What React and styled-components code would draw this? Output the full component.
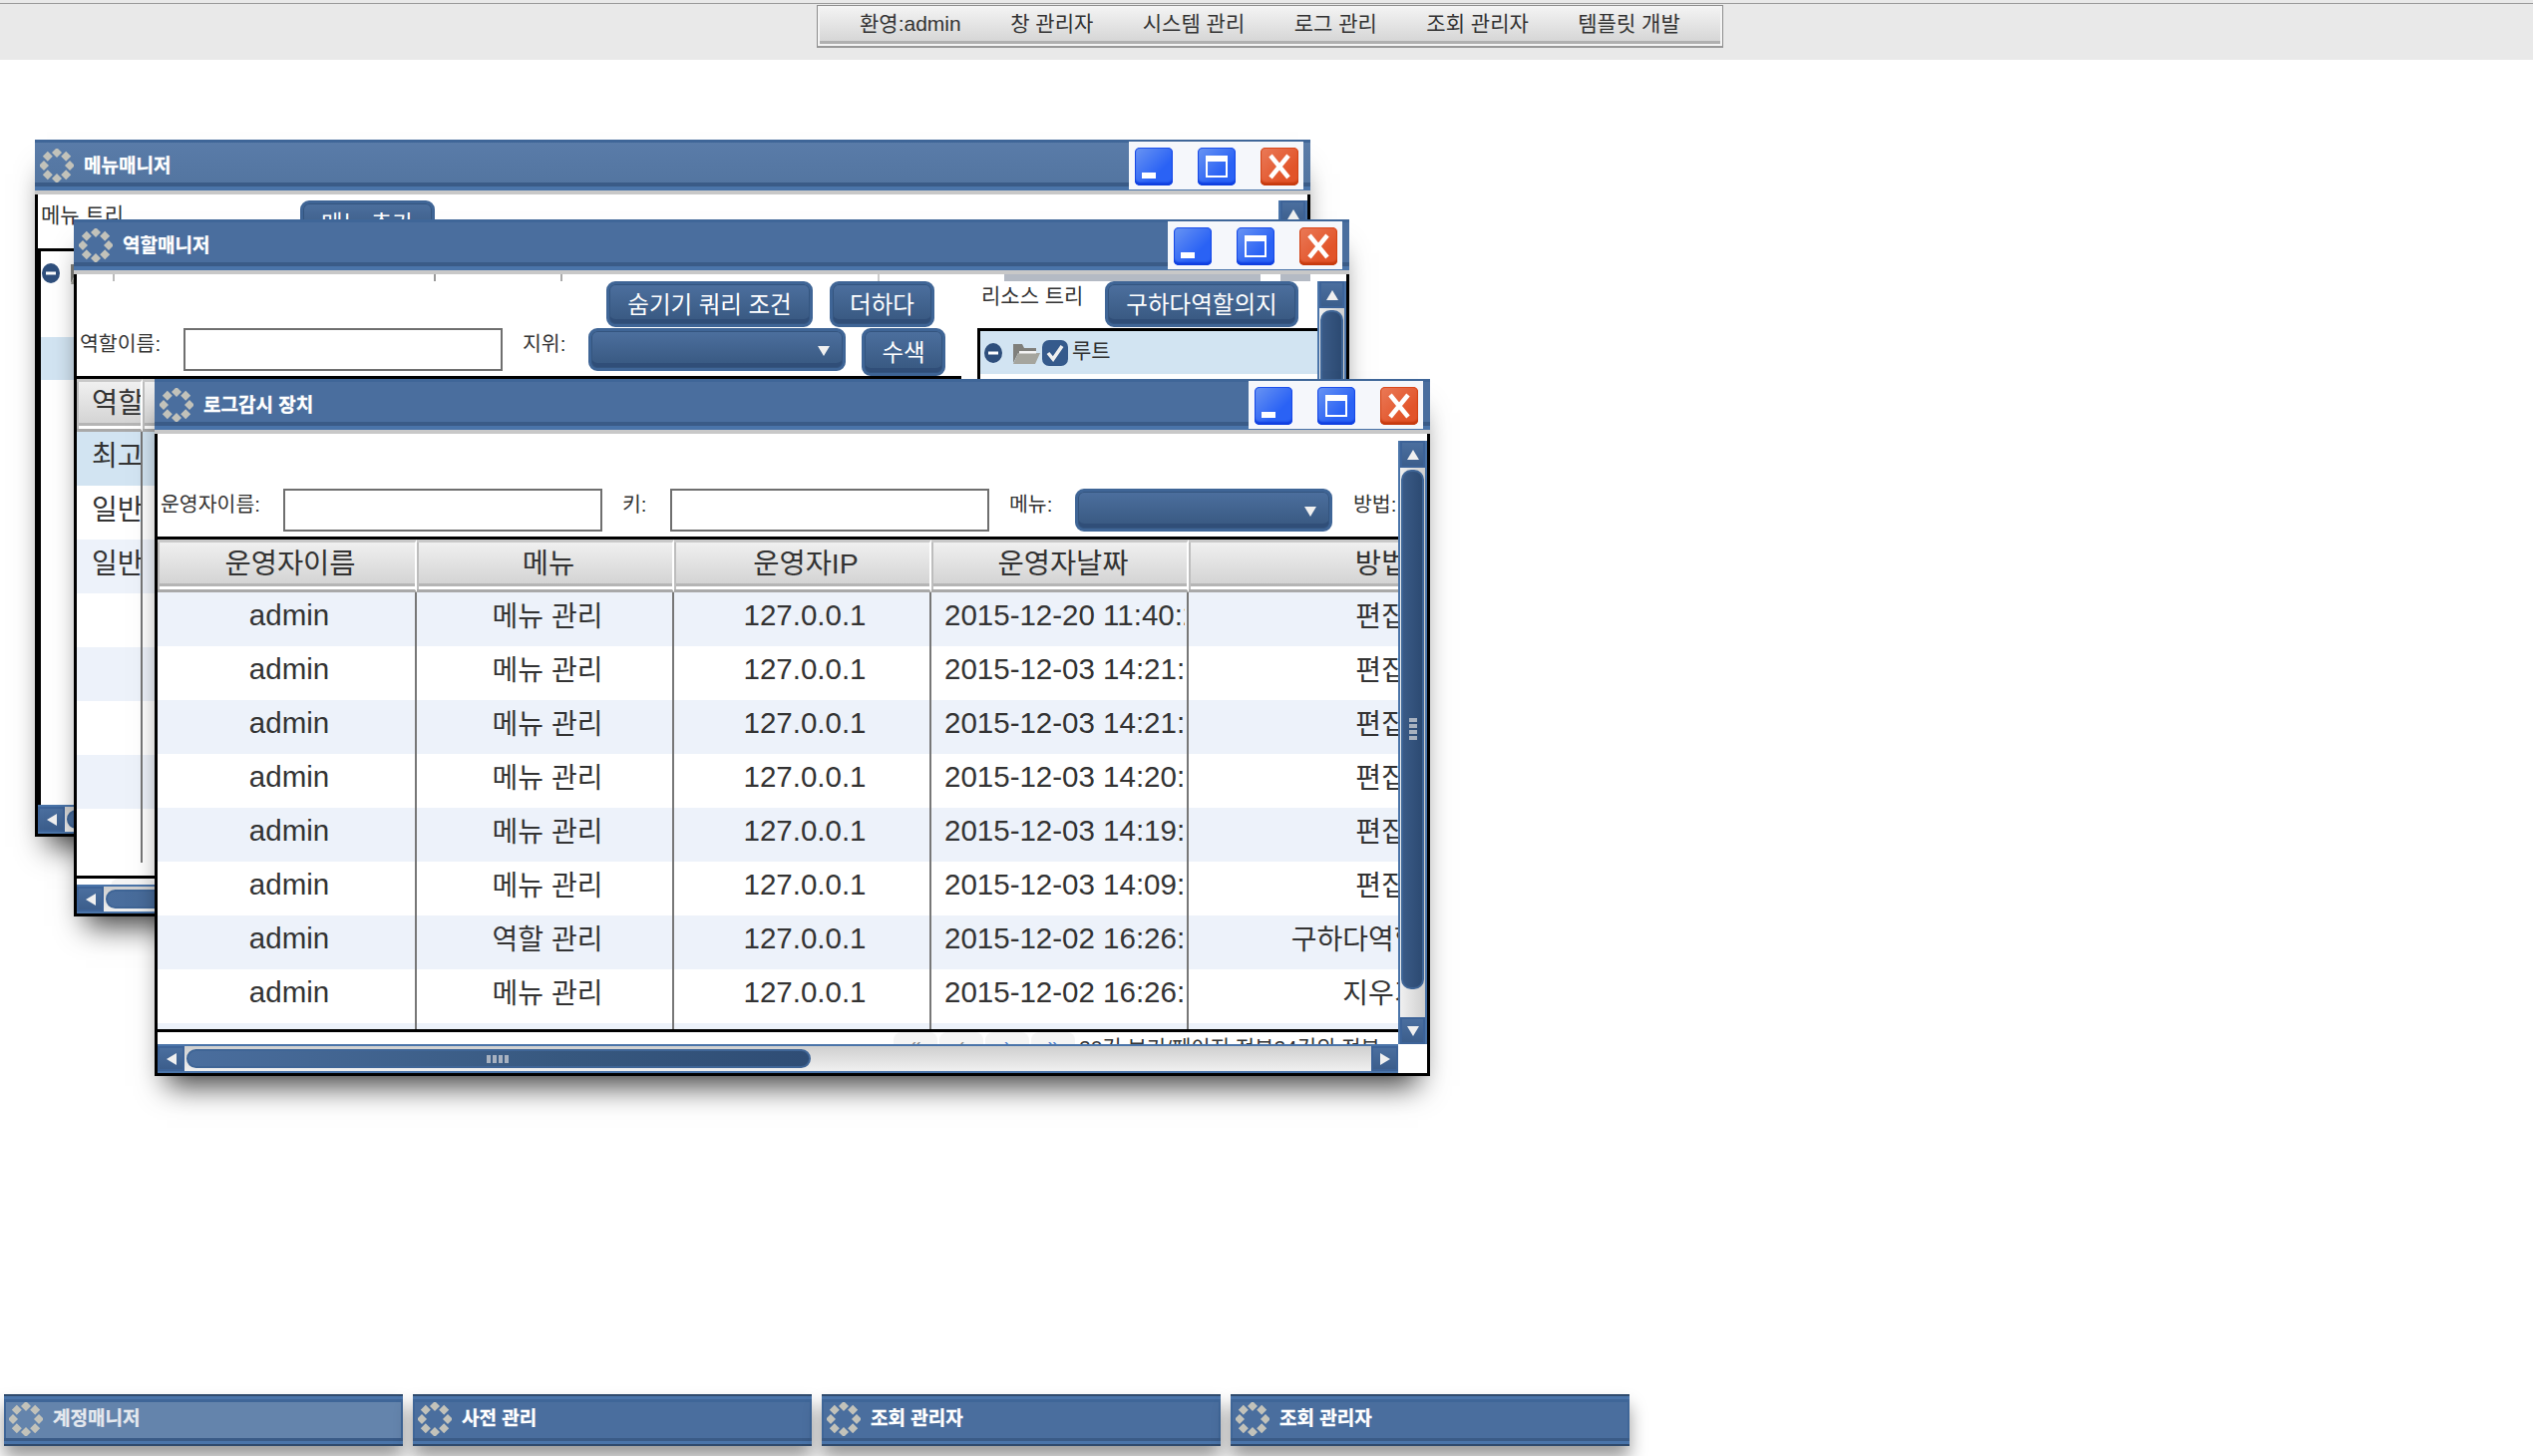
import styled, { createGlobalStyle } from "styled-components";

const GlobalStyle = createGlobalStyle`
  html, body {
    margin: 0;
    padding: 0;
    background: #fff;
  }
  body {
    font-family: "Liberation Sans", "Noto Sans CJK KR", sans-serif;
    color: #333;
  }
`;

const Page = styled.div`
  width: 2540px;
  height: 1460px;
  display: flex;
  flex-direction: column;
  overflow: hidden;
`;

const TopBar = styled.div`
  height: 60px;
  flex: none;
  padding: 5px 0 0 819px;
  box-sizing: border-box;
  background: linear-gradient(#e9e9e9 3px, #9a9a9a 3px, #9a9a9a 4px, #e9e9e9 4px);
`;

const Menu = styled.div`
  width: 909px;
  height: 43px;
  box-sizing: border-box;
  padding: 0 0 8px 42px;
  display: flex;
  align-items: center;
  gap: 49.5px;
  border: 1px solid #8d8d8d;
  border-bottom: 2px solid #999;
  background: linear-gradient(#f4f4f4, #d2d2d2);
  box-shadow: inset 0 0 0 2px #f4f4f4, inset 0 -5px 0 #b0b0b0;
`;

const MenuItem = styled.span`
  font-size: 21px;
  white-space: nowrap;
`;

const Desktop = styled.div`
  position: relative;
  flex: 1;
`;

const Win = styled.div`
  position: absolute;
  left: ${(p) => p.$x}px;
  top: ${(p) => p.$y}px;
  width: 1279px;
  height: 699px;
  box-sizing: border-box;
  display: flex;
  flex-direction: column;
  border: 3px solid #000;
  border-top: none;
  background: #fff;
  box-shadow: 0 22px 28px -12px rgba(0, 0, 0, 0.75);
`;

const TitleBar = styled.div`
  height: 51px;
  flex: none;
  margin: 0 -3px;
  display: flex;
  align-items: flex-start;
  border-bottom: 4px solid #c8c8c8;
  background: ${(p) => (p.$faded ? "linear-gradient(#5a7ca9, #52749f)" : "#4a6e9e")};
  box-shadow: inset 0 3px 0 #3f6698, inset 0 -4px 0 #4a74a9, inset 0 -8px 0 #3a5b87;
`;

const TitleIcon = styled.svg`
  width: 34px;
  height: 34px;
  flex: none;
  margin: 9px 0 0 5px;
`;

const TitleText = styled.span`
  margin: 13px 0 0 10px;
  font-size: 19px;
  line-height: 28px;
  font-weight: bold;
  color: #fff;
  white-space: nowrap;
  -webkit-text-stroke: 0.3px #fff;
`;

const ButtonPanel = styled.div`
  width: 175px;
  height: 48px;
  margin: 2px 7px 0 auto;
  padding: 6px 0 0 6px;
  box-sizing: border-box;
  display: flex;
  gap: 25px;
  background: #f5f7fb;
`;

const WinButton = styled.div`
  width: 38px;
  height: 38px;
  flex: none;
  border-radius: 5px;
  display: flex;
  align-items: center;
  justify-content: center;
  background: ${(p) =>
    p.$close
      ? "linear-gradient(135deg, #ea7a58, #e2542a 70%)"
      : "linear-gradient(135deg, #6a95f2, #2a62f5 65%)"};
  box-shadow: inset 0 -3px 2px ${(p) => (p.$close ? "#c63a0e" : "#0f3fe0")},
    inset 0 0 0 1px ${(p) => (p.$close ? "#d9481c" : "#1c4eea")};
`;

const MinDash = styled.div`
  width: 14px;
  height: 6px;
  margin: 18px 10px 0 0;
  background: #fff;
`;

const MaxBox = styled.div`
  width: 22px;
  height: 22px;
  box-sizing: border-box;
  border: 2px solid #fff;
  border-top-width: 6px;
`;

const Body = styled.div`
  flex: 1;
  min-height: 0;
  display: grid;
  grid-template-columns: 1fr 29px;
  grid-template-rows: 1fr 29px;
`;

const Content = styled.div`
  min-width: 0;
  min-height: 0;
  overflow: hidden;
  display: flex;
  flex-direction: column;
`;

const VBar = styled.div`
  margin-top: ${(p) => p.$top}px;
  min-height: 0;
  display: flex;
  flex-direction: column;
  border-left: 2px solid #4a74a9;
  border-right: 2px solid #4a74a9;
  box-sizing: border-box;
  background: linear-gradient(90deg, #f0f0f0, #cfcfcf);
`;

const HBar = styled.div`
  display: flex;
  border-top: 2px solid #4a74a9;
  border-bottom: 2px solid #4a74a9;
  box-sizing: border-box;
  background: linear-gradient(#cfcfcf, #f0f0f0);
`;

const ScrollButton = styled.div`
  width: ${(p) => (p.$wide ? "100%" : "27px")};
  height: ${(p) => (p.$wide ? "27px" : "100%")};
  flex: none;
  display: flex;
  align-items: center;
  justify-content: center;
  background: linear-gradient(#4c70a0, #3a5c8a);
  box-shadow: inset 0 0 0 2px #3d6398;
`;

const VThumb = styled.div`
  flex: none;
  height: ${(p) => p.$size}px;
  margin: 2px 1px 0;
  display: flex;
  align-items: center;
  justify-content: center;
  border-radius: 10px;
  border: 2px solid #3f6596;
  background: linear-gradient(90deg, #3a5a86, #2c4a72);
`;

const HThumb = styled.div`
  flex: none;
  width: ${(p) => p.$size}px;
  margin: 3px 0 3px 2px;
  display: flex;
  align-items: center;
  justify-content: center;
  border-radius: 10px;
  border: 2px solid #3f6596;
  background: linear-gradient(90deg, #4a6e9e, #37587f 60%, #2f4d75);
`;

const Spacer = styled.div`
  flex: 1;
`;

const GripH = styled.div`
  width: 24px;
  height: 8px;
  background: repeating-linear-gradient(90deg, #a8b2c0 0 4px, transparent 4px 6px);
`;

const GripV = styled.div`
  width: 8px;
  height: 24px;
  background: repeating-linear-gradient(#a8b2c0 0 4px, transparent 4px 6px);
`;

const ToolButton = styled.div`
  width: ${(p) => p.$w}px;
  height: ${(p) => p.$h || 46}px;
  flex: none;
  box-sizing: border-box;
  display: flex;
  align-items: center;
  justify-content: center;
  padding-bottom: 3px;
  border: 3px solid #3f6596;
  border-radius: 9px;
  font-size: 23.5px;
  color: #fff;
  white-space: nowrap;
  background: linear-gradient(#4c6f9e, #37577f);
  box-shadow: inset 0 0 0 1px #34557f, inset 0 -5px 0 #304e78;
`;

const SelectBox = styled.div`
  width: ${(p) => p.$w}px;
  height: 43px;
  flex: none;
  box-sizing: border-box;
  display: flex;
  align-items: center;
  justify-content: flex-end;
  padding: 2px 12px 0 0;
  border: 3px solid #3f6596;
  border-radius: 9px;
  background: linear-gradient(#4c6f9e, #37577f);
  box-shadow: inset 0 0 0 1px #34557f, inset 0 -5px 0 #304e78;
`;

const TextField = styled.div`
  width: 320px;
  height: 43px;
  flex: none;
  box-sizing: border-box;
  border: 2px solid #6f6f6f;
  background: #fff;
`;

const FieldLabel = styled.span`
  flex: none;
  width: ${(p) => p.$w}px;
  padding-left: ${(p) => p.$pad || 0}px;
  box-sizing: border-box;
  font-size: 20.5px;
  line-height: 32px;
  white-space: nowrap;
  overflow: hidden;
`;

/* log window */
const FilterRow = styled.div`
  margin-top: 55px;
  height: 48px;
  flex: none;
  display: flex;
  align-items: flex-start;
`;

const GridFrame = styled.div`
  flex: none;
  height: ${(p) => p.$h}px;
  border-top: 3px solid #000;
  border-bottom: 3px solid #000;
  overflow: hidden;
`;

const Row = styled.div`
  display: grid;
  grid-template-columns: ${(p) => p.$cols};
  height: 54px;
  background: ${(p) => (p.$selected ? "#d2e4f2" : p.$alt ? "#edf2fa" : "#fff")};
`;

const HeadRow = styled(Row)`
  height: 53px;
`;

const HeadCell = styled.div`
  display: flex;
  align-items: center;
  justify-content: ${(p) => (p.$left ? "flex-start" : "center")};
  padding: 0 0 11px ${(p) => (p.$left ? 15 : 8)}px;
  font-size: 28.5px;
  white-space: nowrap;
  overflow: hidden;
  box-sizing: border-box;
  border-top: 3px solid #c9c9c9;
  border-bottom: 3px solid #a9a9a9;
  border-right: 2px solid #fff;
  background: linear-gradient(#f0f0f0, #d0d0d0);
  box-shadow: inset 2px 0 0 #bdbdbd, inset 0 -3px 0 #fff, inset 0 -6px 0 #b5b5b5;
`;

const Cell = styled.div`
  display: flex;
  align-items: center;
  justify-content: ${(p) => (p.$left ? "flex-start" : "center")};
  padding: 0 0 ${(p) => (p.$ko ? 11 : 8)}px ${(p) => p.$pad ?? 6}px;
  font-size: ${(p) => (p.$ko ? 28 : 29.5)}px;
  white-space: nowrap;
  overflow: hidden;
  box-sizing: border-box;
  border-right: ${(p) => (p.$last ? "none" : "2px solid #777")};
`;

const DateText = styled.span`
  display: block;
  width: 241px;
  overflow: hidden;
`;

const Pager = styled.div`
  flex: 1;
  display: flex;
  gap: 2px;
  padding: 0 0 0 ${(p) => p.$pad}px;
  overflow: hidden;
`;

const PagerButton = styled.div`
  width: 44px;
  height: 30px;
  flex: none;
  border-radius: 8px;
  background: #f4f4f4;
  color: ${(p) => p.$color};
  font-size: 20px;
  line-height: 24px;
  text-align: center;
`;

const PagerText = styled.span`
  margin: 4px 0 0 2px;
  font-size: 21px;
  line-height: 24px;
  white-space: nowrap;
`;

/* role window */
const CutStrip = styled.div`
  height: 7px;
  flex: none;
  display: flex;
  overflow: hidden;
`;

const Tick = styled.div`
  flex: none;
  width: ${(p) => p.$w}px;
  margin-left: ${(p) => p.$at}px;
  background: ${(p) => p.$color};
`;

const Panes = styled.div`
  flex: 1;
  min-height: 0;
  display: flex;
  gap: 16px;
`;

const LeftPane = styled.div`
  width: 887px;
  flex: none;
  display: flex;
  flex-direction: column;
`;

const RightPane = styled.div`
  flex: 1;
  min-width: 0;
  display: flex;
  flex-direction: column;
`;

const ButtonRow = styled.div`
  height: 47px;
  flex: none;
  padding-right: 27px;
  display: flex;
  justify-content: flex-end;
  gap: 17px;
`;

const SearchRow = styled.div`
  height: 48px;
  flex: none;
  display: flex;
  align-items: flex-start;
  gap: 0;
`;

const SearchButton = styled(ToolButton)`
  margin-left: 16px;
`;

const TreeHead = styled.div`
  height: 47px;
  flex: none;
  display: flex;
  align-items: flex-start;
  justify-content: space-between;
  padding: 0 19px 0 4px;
`;

const TreeTitle = styled.span`
  font-size: 21px;
  line-height: 30px;
  white-space: nowrap;
`;

const TreeBox = styled.div`
  flex: 1;
  border-top: 3px solid #000;
  border-left: 3px solid #000;
`;

const TreeRow = styled.div`
  height: 43px;
  display: flex;
  align-items: center;
  padding-left: ${(p) => p.$pad ?? 4}px;
  font-size: 21px;
  background: ${(p) => (p.$selected ? "#d2e4f2" : "transparent")};
`;

const TreeIcon = styled.svg`
  flex: none;
  margin-right: ${(p) => p.$gap || 0}px;
`;

const TreeLabel = styled.span`
  margin-left: 3px;
  padding-bottom: 8px;
`;

/* menu window */
const MenuHead = styled.div`
  height: 54px;
  flex: none;
  padding: 6px 0 0 3px;
  box-sizing: border-box;
  display: flex;
  align-items: flex-start;
`;

const MenuTitle = styled.span`
  width: 260px;
  font-size: 21px;
  line-height: 30px;
`;

const Taskbar = styled.div`
  height: 62px;
  flex: none;
  padding-left: 4px;
  display: flex;
  gap: 10px;
`;

const TaskItem = styled.div`
  width: 400px;
  height: 52px;
  box-sizing: border-box;
  display: flex;
  align-items: flex-start;
  border-top: 2px solid #2f4a6c;
  border-bottom: 2px solid #2f4a6c;
  background: ${(p) => (p.$faded ? "#6484ac" : "#4a6e9e")};
  box-shadow: inset 0 3px 0 #4a74a9, inset 0 6px 0 #3f6698, inset 0 -3px 0 #4a74a9,
    inset 0 -6px 0 #3a5b87, inset 2px 0 0 #3f6698, inset -2px 0 0 #3f6698,
    0 12px 18px rgba(0, 0, 0, 0.4);
`;

const TaskIcon = styled(TitleIcon)`
  margin: 6px 0 0 5px;
`;

const TaskText = styled.span`
  margin: 9px 0 0 10px;
  font-size: 19px;
  line-height: 28px;
  font-weight: bold;
  color: ${(p) => (p.$faded ? "#e4e8ee" : "#fff")};
  white-space: nowrap;
  -webkit-text-stroke: 0.3px ${(p) => (p.$faded ? "#e4e8ee" : "#fff")};
`;

const RingIcon = ({ as: Wrap = TitleIcon }) => (
  <Wrap viewBox="0 0 34 34">
    {[0, 45, 90, 135, 180, 225, 270, 315].map((deg) => {
      const x = 17 + 13 * Math.sin((deg * Math.PI) / 180);
      const y = 17 - 13 * Math.cos((deg * Math.PI) / 180);
      return (
        <polygon
          key={deg}
          points={`${x},${y - 5} ${x + 5},${y} ${x},${y + 5} ${x - 5},${y}`}
          fill="#c2c2ba"
        />
      );
    })}
  </Wrap>
);

const Arrow = ({ dir, size = 14 }) => {
  const points = {
    up: "7,2 13,12 1,12",
    down: "1,2 13,2 7,12",
    left: "12,1 12,13 2,7",
    right: "2,1 2,13 12,7",
  }[dir];
  return (
    <svg width={size} height={size} viewBox="0 0 14 14">
      <polygon points={points} fill="#f0f0f0" />
    </svg>
  );
};

const MinusDot = () => (
  <TreeIcon $gap={10} width="18" height="24" viewBox="0 0 18 24">
    <ellipse cx="9" cy="12" rx="9" ry="10" fill="#2f4f7c" />
    <rect x="4" y="10.5" width="10" height="3" fill="#fff" />
  </TreeIcon>
);

const FolderIcon = () => (
  <TreeIcon width="29" height="24" viewBox="0 0 29 24">
    <path d="M1 3 H10 L12 7 H24 V12 H6 L1 22 Z" fill="#7f7f7b" />
    <path d="M6 12 H28 L23 23 H1 Z" fill="#a5a59e" />
    <rect x="7" y="10" width="17" height="2.5" fill="#f4f4f4" />
  </TreeIcon>
);

const CheckIcon = () => (
  <TreeIcon width="28" height="28" viewBox="0 0 28 28">
    <rect x="1" y="1" width="26" height="26" rx="7" fill="#355a8c" />
    <path d="M7 14 L12 20 L21 7" stroke="#f0f0f0" strokeWidth="3.5" fill="none" />
  </TreeIcon>
);

const Window = ({ x, y, title, faded, children }) => (
  <Win $x={x} $y={y}>
    <TitleBar $faded={faded}>
      <RingIcon />
      <TitleText>{title}</TitleText>
      <ButtonPanel>
        <WinButton>
          <MinDash />
        </WinButton>
        <WinButton>
          <MaxBox />
        </WinButton>
        <WinButton $close>
          <svg width="24" height="26" viewBox="0 0 24 26">
            <path d="M3 2 L21 24 M21 2 L3 24" stroke="#fff" strokeWidth="4.5" />
          </svg>
        </WinButton>
      </ButtonPanel>
    </TitleBar>
    {children}
  </Win>
);

const VScroll = ({ top, size }) => (
  <VBar $top={top}>
    <ScrollButton $wide>
      <Arrow dir="up" />
    </ScrollButton>
    <VThumb $size={size}>
      <GripV />
    </VThumb>
    <Spacer />
    <ScrollButton $wide>
      <Arrow dir="down" />
    </ScrollButton>
  </VBar>
);

const HScroll = ({ size }) => (
  <HBar>
    <ScrollButton>
      <Arrow dir="left" />
    </ScrollButton>
    <HThumb $size={size}>
      <GripH />
    </HThumb>
    <Spacer />
    <ScrollButton>
      <Arrow dir="right" />
    </ScrollButton>
  </HBar>
);

const menus = ["환영:admin", "창 관리자", "시스템 관리", "로그 관리", "조회 관리자", "템플릿 개발"];

const logCols = "260px 258px 258px 258px 380px";
const logHead = ["운영자이름", "메뉴", "운영자IP", "운영자날짜", "방법"];
const logRows = [
  ["메뉴 관리", "2015-12-20 11:40:22", "편집"],
  ["메뉴 관리", "2015-12-03 14:21:38", "편집"],
  ["메뉴 관리", "2015-12-03 14:21:09", "편집"],
  ["메뉴 관리", "2015-12-03 14:20:51", "편집"],
  ["메뉴 관리", "2015-12-03 14:19:47", "편집"],
  ["메뉴 관리", "2015-12-03 14:09:13", "편집"],
  ["역할 관리", "2015-12-02 16:26:40", "구하다역할의지"],
  ["메뉴 관리", "2015-12-02 16:26:18", "지우기"],
];

const roleCols = "66px 300px 521px";
const roleRows = [
  { name: "최고 관리자", selected: true },
  { name: "일반 사용자" },
  { name: "일반 사용자", alt: true },
  { name: "" },
  { name: "", alt: true },
  { name: "" },
  { name: "", alt: true },
  { name: "" },
];

const tasks = ["계정매니저", "사전 관리", "조회 관리자", "조회 관리자"];

function App() {
  return (
    <Page>
      <GlobalStyle />
      <TopBar>
        <Menu>
          {menus.map((m) => (
            <MenuItem key={m}>{m}</MenuItem>
          ))}
        </Menu>
      </TopBar>

      <Desktop>
        <Window x={35} y={80} title="메뉴매니저" faded>
          <Body>
            <Content>
              <MenuHead>
                <MenuTitle>메뉴 트리</MenuTitle>
                <ToolButton $w={135}>메뉴 추가</ToolButton>
              </MenuHead>
              <TreeBox>
                <TreeRow $pad={1}>
                  <MinusDot />
                  <FolderIcon />
                </TreeRow>
                <TreeRow />
                <TreeRow $selected />
              </TreeBox>
            </Content>
            <VScroll top={6} size={500} />
            <HScroll size={600} />
          </Body>
        </Window>

        <Window x={74} y={160} title="역할매니저">
          <Body>
            <Content>
              <CutStrip>
                <Tick $at={36} $w={2} $color="#bbb" />
                <Tick $at={320} $w={2} $color="#999" />
                <Tick $at={125} $w={2} $color="#aaa" />
                <Tick $at={316} $w={2} $color="#ccc" />
                <Tick $at={125} $w={257} $color="#b4bac4" />
                <Tick $at={20} $w={30} $color="#b4bac4" />
              </CutStrip>
              <Panes>
                <LeftPane>
                  <ButtonRow>
                    <ToolButton $w={207}>숨기기 쿼리 조건</ToolButton>
                    <ToolButton $w={105}>더하다</ToolButton>
                  </ButtonRow>
                  <SearchRow>
                    <FieldLabel $w={107} $pad={3}>
                      역할이름:
                    </FieldLabel>
                    <TextField />
                    <FieldLabel $w={86} $pad={20}>
                      지위:
                    </FieldLabel>
                    <SelectBox $w={258}>
                      <Arrow dir="down" />
                    </SelectBox>
                    <SearchButton $w={84} $h={48}>
                      수색
                    </SearchButton>
                  </SearchRow>
                  <GridFrame $h={498}>
                    <HeadRow $cols={roleCols}>
                      <HeadCell $left>역할이름</HeadCell>
                      <HeadCell>설명</HeadCell>
                      <HeadCell>날짜</HeadCell>
                    </HeadRow>
                    {roleRows.map((r, i) => (
                      <Row key={i} $cols={roleCols} $selected={r.selected} $alt={r.alt}>
                        <Cell $ko $left $pad={15}>
                          {r.name}
                        </Cell>
                        <Cell />
                        <Cell $last />
                      </Row>
                    ))}
                  </GridFrame>
                  <Pager $pad={34}>
                    <PagerButton $color="#8a8a8a">«</PagerButton>
                  </Pager>
                </LeftPane>
                <RightPane>
                  <TreeHead>
                    <TreeTitle>리소스 트리</TreeTitle>
                    <ToolButton $w={194}>구하다역할의지</ToolButton>
                  </TreeHead>
                  <TreeBox>
                    <TreeRow $selected>
                      <MinusDot />
                      <FolderIcon />
                      <CheckIcon />
                      <TreeLabel>루트</TreeLabel>
                    </TreeRow>
                  </TreeBox>
                </RightPane>
              </Panes>
            </Content>
            <VScroll top={7} size={500} />
            <HScroll size={500} />
          </Body>
        </Window>

        <Window x={155} y={320} title="로그감시 장치">
          <Body>
            <Content>
              <FilterRow>
                <FieldLabel $w={126} $pad={3}>
                  운영자이름:
                </FieldLabel>
                <TextField />
                <FieldLabel $w={68} $pad={20}>
                  키:
                </FieldLabel>
                <TextField />
                <FieldLabel $w={86} $pad={20}>
                  메뉴:
                </FieldLabel>
                <SelectBox $w={258}>
                  <Arrow dir="down" />
                </SelectBox>
                <FieldLabel $w={67} $pad={21}>
                  방법:
                </FieldLabel>
              </FilterRow>
              <GridFrame $h={491}>
                <HeadRow $cols={logCols}>
                  {logHead.map((h) => (
                    <HeadCell key={h}>{h}</HeadCell>
                  ))}
                </HeadRow>
                {logRows.map((r, i) => (
                  <Row key={i} $cols={logCols} $alt={i % 2 === 0}>
                    <Cell>admin</Cell>
                    <Cell $ko>{r[0]}</Cell>
                    <Cell>127.0.0.1</Cell>
                    <Cell $left $pad={13}>
                      <DateText>{r[1]}</DateText>
                    </Cell>
                    <Cell $ko $last>
                      {r[2]}
                    </Cell>
                  </Row>
                ))}
                <Row $cols={logCols} $alt>
                  <Cell />
                  <Cell />
                  <Cell />
                  <Cell />
                  <Cell $last />
                </Row>
              </GridFrame>
              <Pager $pad={738}>
                <PagerButton $color="#8a8a8a">«</PagerButton>
                <PagerButton $color="#8a8a8a">‹</PagerButton>
                <PagerButton $color="#4f7fd0">›</PagerButton>
                <PagerButton $color="#4f7fd0">»</PagerButton>
                <PagerText>20건 보기/페이지 전부24건의 전부</PagerText>
              </Pager>
            </Content>
            <VScroll top={7} size={517} />
            <HScroll size={622} />
          </Body>
        </Window>
      </Desktop>

      <Taskbar>
        {tasks.map((t, i) => (
          <TaskItem key={i} $faded={i === 0}>
            <RingIcon as={TaskIcon} />
            <TaskText $faded={i === 0}>{t}</TaskText>
          </TaskItem>
        ))}
      </Taskbar>
    </Page>
  );
}

export default App;
